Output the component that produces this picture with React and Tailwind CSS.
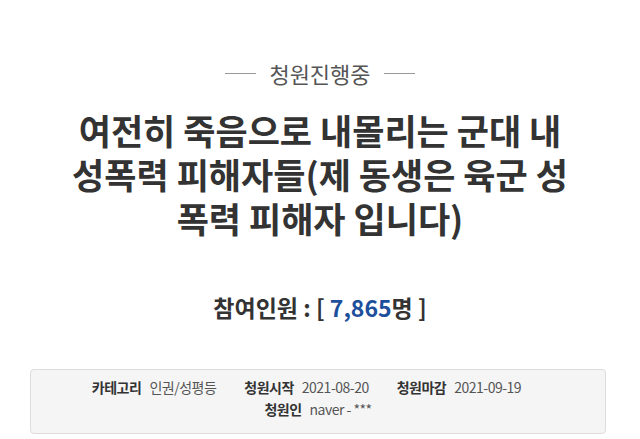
export default function App() {
  const kr = { fontFamily: '"Noto Sans CJK KR", "Noto Sans", sans-serif' };
  return (
    <div className="w-[640px] h-[439px] bg-white overflow-hidden" style={kr}>
      <div className="pt-[58px] flex items-center justify-center gap-[13px]">
        <div className="w-[31px] h-px bg-[#999]" />
        <div className="text-[22px] leading-[30px] text-[#555]">청원진행중</div>
        <div className="w-[31px] h-px bg-[#999]" />
      </div>
      <h1 className="mt-[20px] mx-auto w-[500px] text-center text-[35px] leading-[44px] font-bold text-[#333]">
        여전히 죽음으로 내몰리는 군대 내 성폭력 피해자들(제 동생은 육군 성폭력 피해자 입니다)
      </h1>
      <div className="mt-[51px] text-center text-[23px] leading-[32px] font-bold text-[#333]">
        참여인원 : [ <span className="text-[#1d4f9c]">7,865</span>명 ]
      </div>
      <div className="mt-[46px] mx-[30px] w-[576px] h-[65px] rounded-[4px] border border-[#ddd] bg-[#f5f5f5] pt-[6px] text-[14px] leading-[22px] text-[#555] tracking-[-0.5px]">
        <div className="flex justify-center gap-[28px] pr-[23px]">
          <div><span className="font-bold text-[#333] mr-[8px]">카테고리</span>인권/성평등</div>
          <div><span className="font-bold text-[#333] mr-[8px]">청원시작</span>2021-08-20</div>
          <div><span className="font-bold text-[#333] mr-[8px]">청원마감</span>2021-09-19</div>
        </div>
        <div className="flex justify-center">
          <div><span className="font-bold text-[#333] mr-[8px]">청원인</span>naver - ***</div>
        </div>
      </div>
    </div>
  );
}
